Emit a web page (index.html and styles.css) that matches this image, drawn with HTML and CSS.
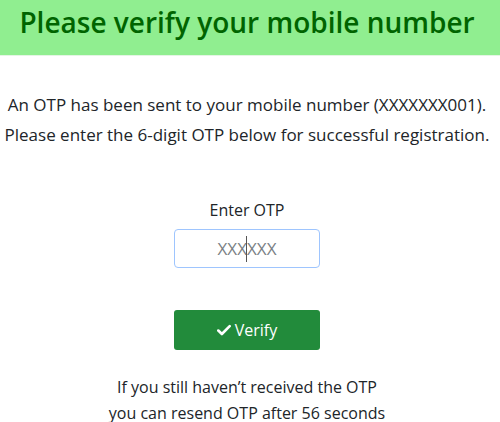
FILE: index.html
```html
<!DOCTYPE html>
<html lang="en">
<head>
  <title>Verify Mobile</title>
  <meta charset="UTF-8">
  <meta name="viewport" content="width=device-width, initial-scale=1">
  <link rel="stylesheet" href="styles.css">
</head>
<body>

  <h1 class="banner">Please verify your mobile number</h1>

  <div class="otp-page">
    <p class="intro">An OTP has been sent to your mobile number (XXXXXXX001).<br>Please enter the 6-digit OTP below for successful registration.</p>

    <form class="otp-form" onsubmit="return false;">
      <label for="otp" class="otp-label">Enter OTP</label>
      <div class="otp-field">
        <input type="text" id="otp" class="otp-input" placeholder="XXXXXX" maxlength="6">
        <span class="ibeam"></span>
      </div>
      <button type="submit" class="verify-btn">
        <svg class="check" viewBox="0 0 16 16" width="14" height="14"><path d="M1.5 8.6 L5.6 12.6 L14.5 3.6" fill="none" stroke="#fff" stroke-width="3" stroke-linecap="round" stroke-linejoin="round"/></svg>
        Verify
      </button>
    </form>

    <p class="resend">If you still haven’t received the OTP<br>you can resend OTP after 56 seconds</p>
  </div>

</body>
</html>
```

FILE: styles.css
```css
* {
  box-sizing: border-box;
}

body {
  margin: 0;
  font-family: "Open Sans", "Noto Sans", sans-serif;
  background-color: #fff;
  color: #212529;
}

.banner {
  margin: 0;
  height: 56px;
  padding-right: 6px;
  background-color: #90ee90; /* lightgreen */
  color: #006400;
  font-size: 28px;
  font-weight: 600;
  text-align: center;
  line-height: 44px;
  border-bottom: 1px solid #e4f5e4;
}

.otp-page {
  display: flex;
  flex-direction: column;
  align-items: center;
  padding-right: 6px;
}

.intro {
  margin: 34px 0 0;
  font-size: 17px;
  line-height: 30px;
  text-align: center;
}

.otp-form {
  display: flex;
  flex-direction: column;
  align-items: center;
  margin-top: 48px;
}

.otp-label {
  font-size: 16px;
  line-height: 24px;
}

.otp-field {
  position: relative;
  margin-top: 7px;
}

.otp-input {
  width: 146px;
  height: 39px;
  border: 1px solid #9ec5fe;
  border-radius: 4px;
  font-family: inherit;
  font-size: 17px;
  text-align: center;
  color: #495057;
  outline: none;
}

.otp-input::placeholder {
  color: #7a7f85;
}

.ibeam {
  position: absolute;
  left: 72px;
  top: 7px;
  width: 1px;
  height: 26px;
  background-color: #555;
}

.verify-btn {
  margin-top: 42px;
  width: 146px;
  height: 40px;
  border: none;
  border-radius: 3px;
  background-color: #228b3b;
  color: #fff;
  font-family: inherit;
  font-size: 16px;
  display: flex;
  align-items: center;
  justify-content: center;
  gap: 4px;
}

.resend {
  margin: 24px 0 0;
  font-size: 16px;
  line-height: 26px;
  text-align: center;
}
```
